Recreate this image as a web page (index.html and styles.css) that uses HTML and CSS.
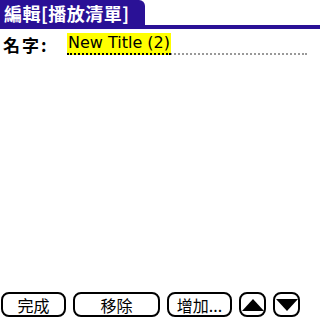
FILE: index.html
```html
<!DOCTYPE html>
<html>
<head>
<meta charset="utf-8">
<link rel="stylesheet" href="styles.css">
</head>
<body>
<div class="screen">
  <div class="header">
    <div class="tab">編輯[播放清單]</div>
  </div>
  <div class="row">
    <div class="label">名字:</div>
    <div class="field"><span class="value">New Title (2)</span></div>
  </div>
  <div class="spacer"></div>
  <div class="buttons">
    <div class="btn b-done">完成</div>
    <div class="btn b-remove">移除</div>
    <div class="btn b-add">增加...</div>
    <div class="btn b-arrow"><svg width="22" height="12" viewBox="0 0 22 12"><polygon points="11,0 22,12 0,12" fill="#000"/></svg></div>
    <div class="btn b-arrow"><svg width="22" height="12" viewBox="0 0 22 12"><polygon points="0,0 22,0 11,12" fill="#000"/></svg></div>
  </div>
</div>
</body>
</html>
```
FILE: styles.css
```css
html, body {
  margin: 0;
  padding: 0;
  background: #fff;
}
.screen {
  width: 320px;
  height: 328px;
  display: flex;
  flex-direction: column;
  font-family: "Noto Sans CJK TC", "Noto Sans CJK SC", sans-serif;
  color: #000;
}
.header {
  display: flex;
  border-bottom: 4px solid #2a1196;
}
.tab {
  height: 25px;
  width: 141px;
  padding-left: 4px;
  background: #2a1196;
  color: #fff;
  font-weight: bold;
  font-size: 18px;
  line-height: 26px;
  letter-spacing: 0.5px;
  border-top-right-radius: 6px;
  white-space: nowrap;
  overflow: hidden;
}
.row {
  display: flex;
  align-items: flex-end;
  margin-top: 4px;
  padding-left: 3px;
  height: 22px;
}
.label {
  width: 64px;
  font-weight: bold;
  font-size: 17px;
  line-height: 20px;
  letter-spacing: 2px;
}
.field {
  width: 240px;
  border-bottom: 2px dotted #999;
  height: 20px;
  display: flex;
}
.value {
  background: #ffff00;
  font-family: "DejaVu Sans", sans-serif;
  font-size: 16px;
  line-height: 20px;
  height: 20px;
  padding: 0 1px;
  margin-bottom: -2px;
  border-bottom: 2px dotted #000;
}
.spacer {
  flex: 1;
}
.buttons {
  display: flex;
  padding-left: 1px;
  margin-bottom: 11px;
  gap: 7px;
}
.btn {
  box-sizing: border-box;
  height: 25px;
  border: 2px solid #000;
  border-radius: 8px;
  display: flex;
  align-items: center;
  justify-content: center;
  font-size: 16px;
  line-height: 1;
}
.b-done { width: 65px; }
.b-remove { width: 87px; }
.b-add { width: 65px; }
.b-arrow { width: 27px; }
```
